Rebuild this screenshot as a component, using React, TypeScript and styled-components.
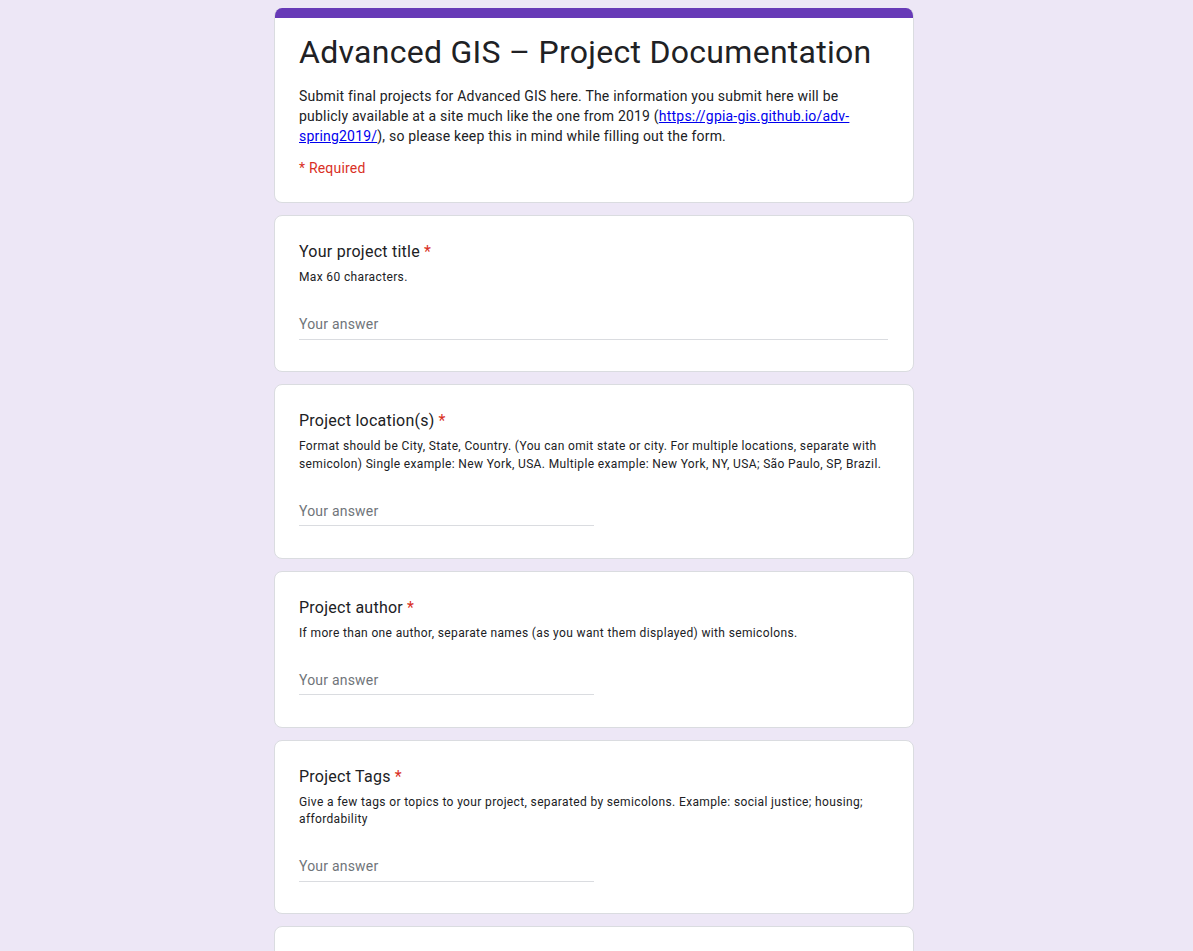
import * as React from 'react'
import styled, { createGlobalStyle } from 'styled-components'

const GlobalStyle = createGlobalStyle`
  html, body {
    margin: 0;
    padding: 0;
    background: #ede7f6;
  }
  body {
    font-family: Roboto, Arial, sans-serif;
    color: #202124;
  }
`

const Page = styled.div`
  padding: 8px 5px 0 0;
  min-height: 100vh;
  box-sizing: border-box;
`

const Column = styled.div`
  width: 640px;
  margin: 0 auto;
  display: flex;
  flex-direction: column;
  gap: 12px;
`

const Card = styled.div`
  background: #fff;
  border: 1px solid #dadce0;
  border-radius: 8px;
  padding: 24px 24px 24px 24px;
  box-sizing: border-box;
`

const HeaderCard = styled.div`
  background: #fff;
  border: 1px solid #dadce0;
  border-top: none;
  border-radius: 8px;
  overflow: hidden;
`

const TopBar = styled.div`
  height: 10px;
  background: #673ab7;
`

const HeaderBody = styled.div`
  padding: 14px 24px 24px 24px;
`

const FormTitle = styled.h1`
  margin: 0;
  font-family: Roboto, Arial, sans-serif;
  font-weight: 400;
  font-size: 32px;
  line-height: 40px;
  letter-spacing: 0.28px;
  color: #202124;
`

const FormDesc = styled.div`
  margin-top: 14px;
  font-size: 14px;
  line-height: 20px;
  letter-spacing: 0.2px;
  color: #202124;
  a {
    color: #0000ee;
    text-decoration: underline;
  }
`

const RequiredNote = styled.div`
  margin-top: 12px;
  font-size: 14px;
  line-height: 20px;
  letter-spacing: 0.2px;
  color: #d93025;
`

const QTitle = styled.div`
  font-family: Roboto, Arial, sans-serif;
  font-size: 16px;
  line-height: 24px;
  letter-spacing: 0.25px;
  color: #202124;
`

const Star = styled.span`
  color: #d93025;
  margin-left: 4px;
`

const QDesc = styled.div`
  margin-top: 5px;
  font-size: 12px;
  line-height: 17.5px;
  letter-spacing: 0.36px;
  color: #202124;
`

const Answer = styled.div<{ $full?: boolean }>`
  margin-top: 23px;
  margin-bottom: 7.5px;
  width: ${(p) => (p.$full ? 'calc(100% - 1px)' : '50%')};
  height: 29px;
  display: flex;
  align-items: center;
  border-bottom: 1px solid #dadce0;
  font-size: 14px;
  letter-spacing: 0.2px;
  color: #70757a;
`

type Q = { title: string; desc: string; full?: boolean }

const questions: Q[] = [
  { title: 'Your project title', desc: 'Max 60 characters.', full: true },
  {
    title: 'Project location(s)',
    desc: 'Format should be City, State, Country. (You can omit state or city. For multiple locations, separate with semicolon) Single example: New York, USA. Multiple example: New York, NY, USA; São Paulo, SP, Brazil.',
  },
  {
    title: 'Project author',
    desc: 'If more than one author, separate names (as you want them displayed) with semicolons.',
  },
  {
    title: 'Project Tags',
    desc: 'Give a few tags or topics to your project, separated by semicolons. Example: social justice; housing; affordability',
  },
  {
    title: 'Project description',
    desc: 'A short summary of your project.',
  },
]

const Question = ({ q }: { q: Q }) => (
  <Card>
    <QTitle>
      {q.title}
      <Star>*</Star>
    </QTitle>
    <QDesc>{q.desc}</QDesc>
    <Answer $full={q.full}>Your answer</Answer>
  </Card>
)

export default function App() {
  return (
    <Page>
      <GlobalStyle />
      <Column>
        <HeaderCard>
          <TopBar />
          <HeaderBody>
            <FormTitle>Advanced GIS – Project Documentation</FormTitle>
            <FormDesc>
              Submit final projects for Advanced GIS here. The information you submit here will be
              publicly available at a site much like the one from 2019 (
              <a href="#">https://gpia-gis.github.io/adv-spring2019/</a>), so please keep this in mind
              while filling out the form.
            </FormDesc>
            <RequiredNote>* Required</RequiredNote>
          </HeaderBody>
        </HeaderCard>
        {questions.map((q) => (
          <Question key={q.title} q={q} />
        ))}
      </Column>
    </Page>
  )
}
